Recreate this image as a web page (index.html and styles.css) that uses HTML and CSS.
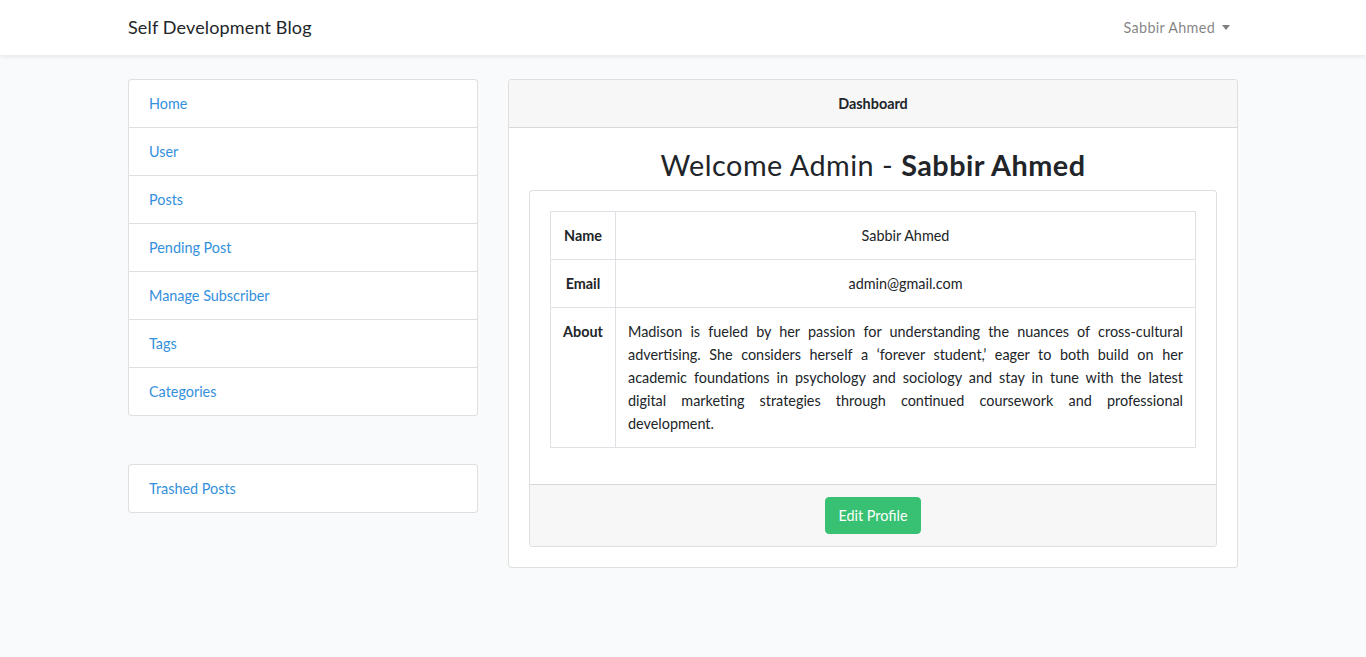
FILE: index.html
```html
<!DOCTYPE html>
<html lang="en">
<head>
<meta charset="utf-8">
<title>Self Development Blog</title>
<link rel="stylesheet" href="styles.css">
</head>
<body>
<nav class="navbar">
  <div class="container nav-inner">
    <a class="brand" href="#">Self Development Blog</a>
    <a class="nav-link" href="#">Sabbir Ahmed <span class="caret"></span></a>
  </div>
</nav>
<main class="main">
  <div class="container row">
    <aside class="col-side">
      <ul class="list-group">
        <li class="list-item"><a href="#">Home</a></li>
        <li class="list-item"><a href="#">User</a></li>
        <li class="list-item"><a href="#">Posts</a></li>
        <li class="list-item"><a href="#">Pending Post</a></li>
        <li class="list-item"><a href="#">Manage Subscriber</a></li>
        <li class="list-item"><a href="#">Tags</a></li>
        <li class="list-item"><a href="#">Categories</a></li>
      </ul>
      <ul class="list-group trash">
        <li class="list-item"><a href="#">Trashed Posts</a></li>
      </ul>
    </aside>
    <section class="col-main">
      <div class="card">
        <div class="card-header">Dashboard</div>
        <div class="card-body">
          <h2 class="welcome">Welcome Admin - <b>Sabbir Ahmed</b></h2>
          <div class="card inner">
            <div class="card-body">
              <table class="table">
                <tr><th>Name</th><td>Sabbir Ahmed</td></tr>
                <tr><th>Email</th><td>admin@gmail.com</td></tr>
                <tr><th>About</th><td class="about">Madison is fueled by her passion for understanding the nuances of cross-cultural advertising. She considers herself a ‘forever student,’ eager to both build on her academic foundations in psychology and sociology and stay in tune with the latest digital marketing strategies through continued coursework and professional development.</td></tr>
              </table>
            </div>
            <div class="card-footer">
              <a class="btn" href="#">Edit Profile</a>
            </div>
          </div>
        </div>
      </div>
    </section>
  </div>
</main>
</body>
</html>
```
FILE: styles.css
```css
* { box-sizing: border-box; }
html, body { margin: 0; }
body {
  background: #f8fafc;
  font-family: "Lato", "Noto Sans", sans-serif;
  font-size: 14.4px;
  line-height: 1.6;
  color: #212529;
}
a { color: #3490dc; text-decoration: none; }
.container { width: 1140px; margin: 0 auto; padding: 0 15px; }
.navbar {
  background: #fff;
  height: 55px;
  box-shadow: 0 2px 4px rgba(0,0,0,.075);
}
.nav-inner {
  display: flex;
  align-items: center;
  justify-content: space-between;
  height: 55px;
}
.brand { font-size: 18px; color: #212529; line-height: 28.8px; letter-spacing: 0.15px; }
.nav-link { color: rgba(0,0,0,.5); padding: 8px 8px; line-height: 23px; letter-spacing: 0.3px; }
.caret {
  display: inline-block;
  margin-left: 3px;
  vertical-align: 3px;
  border-top: 5px solid rgba(0,0,0,.5);
  border-left: 4.5px solid transparent;
  border-right: 4.5px solid transparent;
}
.main { padding: 24px 0; }
.row { display: flex; gap: 30px; }
.col-side { width: 350px; flex: none; }
.col-main { width: 730px; flex: none; }
.list-group {
  list-style: none;
  margin: 0;
  padding: 0;
  background: #fff;
  border: 1px solid rgba(0,0,0,.125);
  border-radius: 4px;
}
.list-item {
  padding: 12px 20px;
  line-height: 23px;
  border-top: 1px solid rgba(0,0,0,.125);
}
.list-item:first-child { border-top: 0; }
.trash { margin-top: 48px; }
.card {
  background: #fff;
  border: 1px solid rgba(0,0,0,.125);
  border-radius: 4px;
}
.card-header {
  background: #f7f7f7;
  border-bottom: 1px solid rgba(0,0,0,.125);
  padding: 12px 20px;
  text-align: center;
  font-weight: 700;
  line-height: 23px;
  border-radius: 3px 3px 0 0;
}
.card-body { padding: 20px; }
.welcome {
  margin: 0 0 8px;
  font-size: 28.8px;
  font-weight: 400;
  line-height: 34px;
  letter-spacing: 0.5px;
  text-align: center;
}
.welcome b { font-weight: 700; }
.table {
  width: 100%;
  border-collapse: collapse;
  margin-bottom: 16px;
  text-align: center;
}
.table th, .table td {
  border: 1px solid #dee2e6;
  padding: 12px;
  vertical-align: top;
  line-height: 23px;
}
.table th { width: 65px; font-weight: 700; }
.table td.about { text-align: justify; }
.card-footer {
  background: #f7f7f7;
  border-top: 1px solid rgba(0,0,0,.125);
  padding: 12px 20px;
  text-align: center;
  border-radius: 0 0 3px 3px;
}
.btn {
  display: inline-block;
  background: #38c172;
  color: #fff;
  border: 1px solid #38c172;
  border-radius: 4px;
  padding: 6px 12px;
  line-height: 23px;
}
```
